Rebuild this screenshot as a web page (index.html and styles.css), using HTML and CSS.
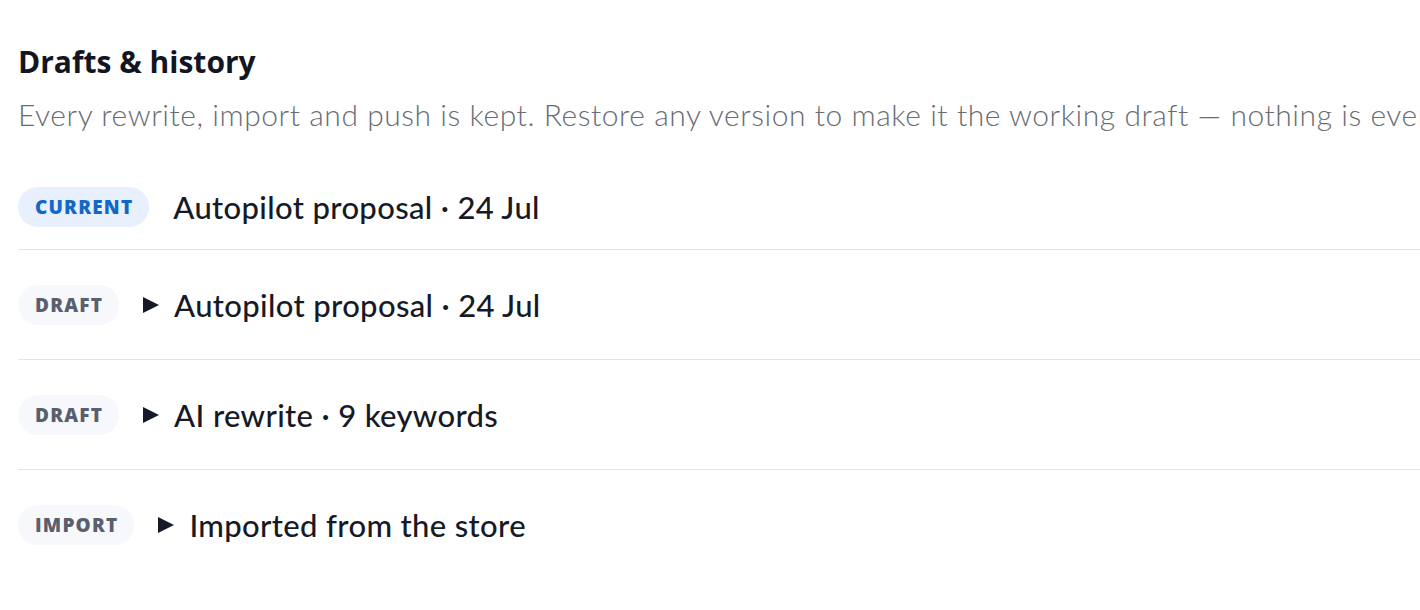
FILE: index.html
```html
<!DOCTYPE html>
<html lang="en">
<head>
    <meta charset="UTF-8">
    <meta name="viewport" content="width=device-width, initial-scale=1.0">
    <title>Drafts &amp; history</title>
    <link rel="stylesheet" href="styles.css">
</head>
<body>

    <!-- history panel -->
    <div class="history">
        <h2 class="history-title">Drafts &amp; history</h2>
        <p class="history-sub">Every rewrite, import and push is kept. Restore any version to make it the working draft — nothing is ever lost.</p>

        <div class="version current">
            <span class="badge badge-current">Current</span>
            <span class="version-name">Autopilot proposal · 24 Jul</span>
        </div>

        <div class="version">
            <span class="badge">Draft</span>
            <span class="version-name"><span class="caret"></span>Autopilot proposal · 24 Jul</span>
        </div>

        <div class="version">
            <span class="badge">Draft</span>
            <span class="version-name"><span class="caret"></span>AI rewrite · 9 keywords</span>
        </div>

        <div class="version last">
            <span class="badge">Import</span>
            <span class="version-name"><span class="caret"></span>Imported from the store</span>
        </div>
    </div>

</body>
</html>
```

FILE: styles.css
```css
body { margin: 0; padding: 0; background: #fff; font-family: 'Lato', 'Open Sans', sans-serif; color: #161a26; overflow: hidden; }

.history { padding: 0 0 0 18px; overflow: hidden; }

.history-title { margin: 0; padding-top: 44px; font-family: 'Open Sans', 'Lato', sans-serif; font-size: 30px; font-weight: 700; line-height: 36px; color: #121622; }
.history-sub { margin: 16px 0 0; font-size: 30px; font-weight: 300; line-height: 36px; letter-spacing: 0.55px; color: #686c74; white-space: nowrap; overflow: hidden; }

.version {
    display: flex;
    align-items: center;
    gap: 24px;
    box-sizing: border-box;
    height: 110px;
    border-bottom: 1px solid #e2e4e8;
}
.version.current { height: 86px; margin-top: 32px; }
.version.last { border-bottom: none; }

.badge {
    display: inline-block;
    padding: 0 16px 0 17px;
    height: 40px;
    line-height: 40px;
    border-radius: 20px;
    background: #f6f8fb;
    color: #5a5f6e;
    font-family: 'Open Sans', 'Lato', sans-serif;
    font-size: 19px;
    font-weight: 800;
    letter-spacing: 1.2px;
    text-transform: uppercase;
}
.badge-current { background: #e7f0fc; color: #1168c6; }

.version-name { display: flex; align-items: center; font-size: 31px; font-weight: 500; letter-spacing: 0.35px; }

.caret {
    display: inline-block;
    width: 0;
    height: 0;
    margin-right: 15px;
    border-left: 16px solid #161a26;
    border-top: 8px solid transparent;
    border-bottom: 8px solid transparent;
}
```
